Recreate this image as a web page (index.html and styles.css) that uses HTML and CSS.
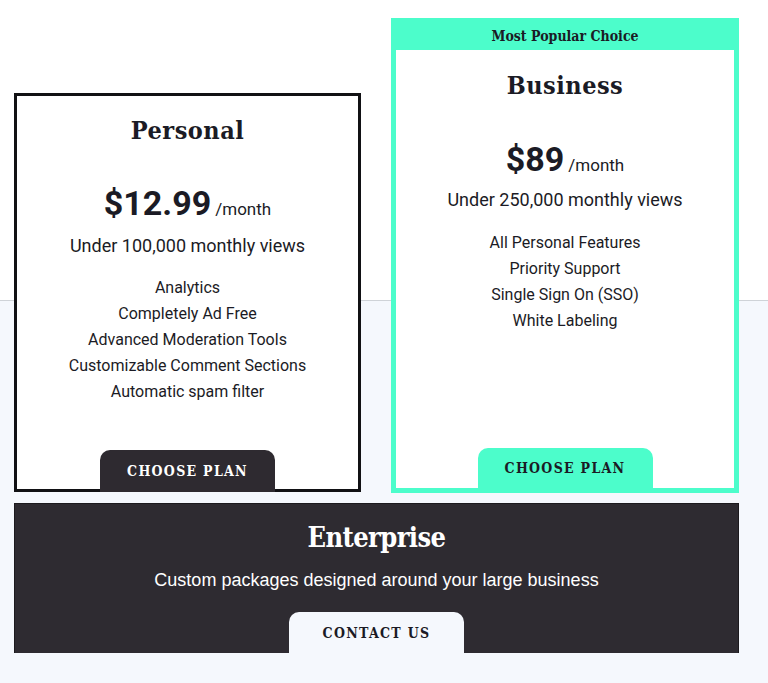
FILE: index.html
```html
<!DOCTYPE html>
<html lang="en">
<head>
<meta charset="utf-8">
<title>Pricing</title>
<link rel="stylesheet" href="styles.css">
</head>
<body>
<main class="pricing">
  <div class="plans">
    <section class="card card-personal">
      <h2 class="plan-name">Personal</h2>
      <p class="price"><span class="amount">$12.99</span> <span class="per">/month</span></p>
      <p class="views">Under 100,000 monthly views</p>
      <ul class="features">
        <li>Analytics</li>
        <li>Completely Ad Free</li>
        <li>Advanced Moderation Tools</li>
        <li>Customizable Comment Sections</li>
        <li>Automatic spam filter</li>
      </ul>
      <a class="btn btn-dark" href="#">CHOOSE PLAN</a>
    </section>
    <section class="card card-business">
      <div class="badge">Most Popular Choice</div>
      <h2 class="plan-name">Business</h2>
      <p class="price"><span class="amount">$89</span> <span class="per">/month</span></p>
      <p class="views">Under 250,000 monthly views</p>
      <ul class="features">
        <li>All Personal Features</li>
        <li>Priority Support</li>
        <li>Single Sign On (SSO)</li>
        <li>White Labeling</li>
      </ul>
      <a class="btn btn-teal" href="#">CHOOSE PLAN</a>
    </section>
  </div>
  <section class="enterprise">
    <h2 class="ent-title">Enterprise</h2>
    <p class="ent-text">Custom packages designed around your large business</p>
    <a class="btn btn-light" href="#">CONTACT US</a>
  </section>
</main>
</body>
</html>
```
FILE: styles.css
```css
html, body {
  margin: 0;
  padding: 0;
}
body {
  background: linear-gradient(to bottom, #ffffff 0, #ffffff 300px, #cfd3d8 300px, #cfd3d8 301px, #f5f8fd 301px);
  min-height: 683px;
  font-family: Roboto, "Liberation Sans", Arial, sans-serif;
  color: #1b1b25;
}
.pricing {
  width: 725px;
  padding: 18px 0 0 14px;
}
.plans {
  display: flex;
  align-items: flex-end;
  gap: 30px;
}
.card {
  box-sizing: border-box;
  background: #fff;
  display: flex;
  flex-direction: column;
  align-items: center;
  text-align: center;
}
.card-personal {
  width: 347px;
  height: 399px;
  border: 3px solid #111114;
  padding-top: 19px;
  margin-bottom: 1px;
}
.card-business {
  width: 348px;
  height: 475px;
  border: 5px solid #4cfdcb;
  border-top: 0;
}
.badge {
  align-self: stretch;
  background: #4cfdcb;
  height: 32px;
  line-height: 37px;
  font-family: "DejaVu Serif Condensed", "DejaVu Serif", serif;
  font-weight: bold;
  font-size: 14px;
  color: #1b1b25;
  margin-bottom: 20px;
}
.plan-name {
  margin: 0;
  font-family: "DejaVu Serif Condensed", "DejaVu Serif", serif;
  font-weight: bold;
  font-size: 25px;
  letter-spacing: 0.5px;
  line-height: 32px;
}
.price {
  margin: 34px 0 0;
  line-height: 44px;
  height: 44px;
}
.card-business .price {
  margin-top: 35px;
}
.amount {
  font-size: 34px;
  font-weight: 700;
}
.per {
  font-size: 17px;
}
.views {
  margin: 8px 0 0;
  font-size: 18px;
  line-height: 25px;
}
.card-business .views {
  margin-top: 6px;
}
.features {
  list-style: none;
  margin: 17px 0 0;
  padding: 0;
  font-size: 16px;
  line-height: 26px;
}
.card-business .features {
  margin-top: 18px;
}
.btn {
  display: block;
  box-sizing: border-box;
  width: 175px;
  height: 42px;
  border-radius: 10px 10px 0 0;
  text-decoration: none;
  font-family: "DejaVu Serif Condensed", "DejaVu Serif", serif;
  font-size: 14px;
  letter-spacing: 1.3px;
  line-height: 42px;
  text-align: center;
}
.card .btn {
  margin-top: auto;
}
.btn-dark {
  background: #2e2a30;
  color: #fff;
  font-weight: bold;
  margin-bottom: -3px;
}
.btn-teal {
  background: #4cfdcb;
  color: #1b1b25;
  height: 40px;
  line-height: 40px;
  font-weight: 600;
}
.enterprise {
  box-sizing: border-box;
  margin-top: 10px;
  height: 150px;
  background: #2e2b31;
  border: 1px solid #1c1a1e;
  border-bottom: 0;
  display: flex;
  flex-direction: column;
  align-items: center;
  color: #fff;
  padding-top: 17px;
}
.ent-title {
  margin: 0;
  font-family: "DejaVu Serif Condensed", "DejaVu Serif", serif;
  font-weight: bold;
  font-size: 27px;
  letter-spacing: -0.6px;
  line-height: 34px;
}
.ent-text {
  margin: 14px 0 0;
  font-family: "Liberation Sans", Arial, sans-serif;
  font-size: 18px;
  line-height: 22px;
}
.btn-light {
  margin-top: auto;
  background: #f5f8fd;
  color: #1b1b25;
  height: 41px;
  line-height: 43px;
  font-weight: 600;
}
```
